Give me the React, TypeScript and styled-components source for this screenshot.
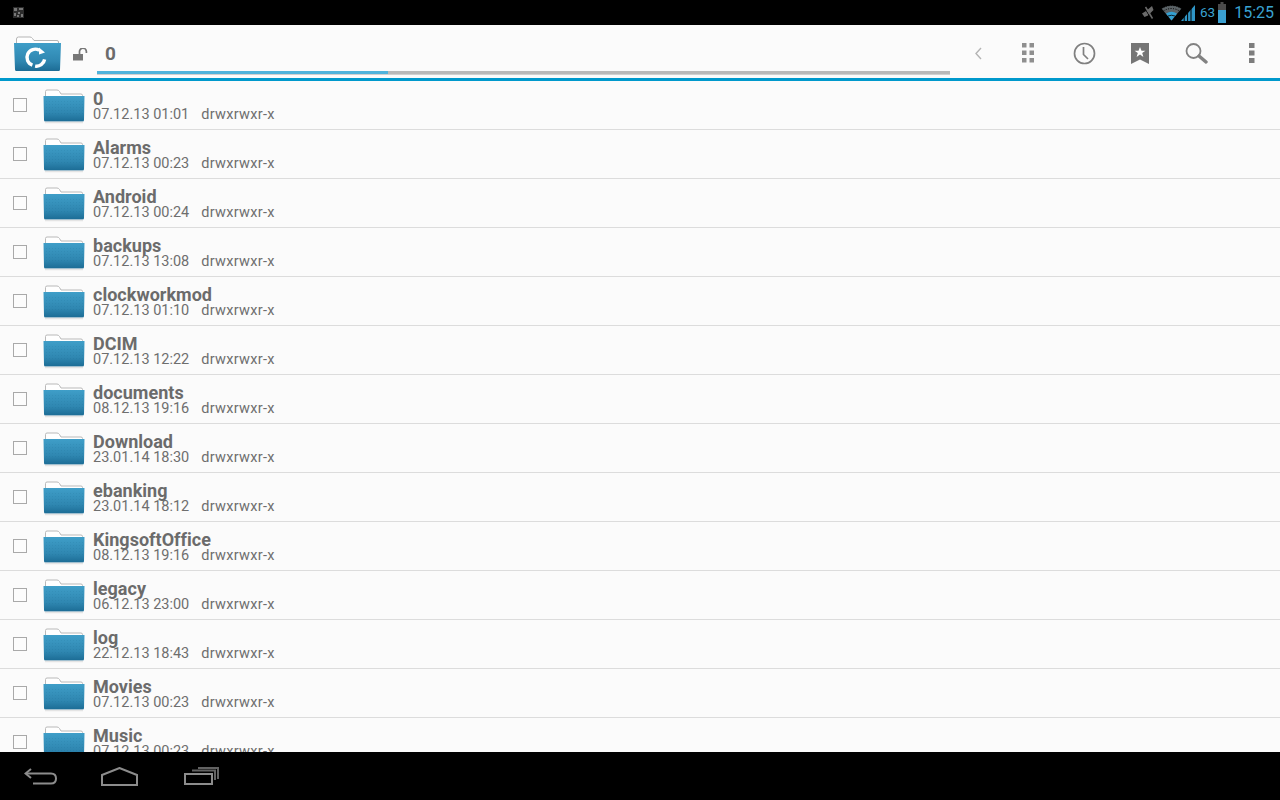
import React from 'react';
import styled, { createGlobalStyle } from 'styled-components';

const Global = createGlobalStyle`
  html, body { margin: 0; padding: 0; height: 100%; overflow: hidden; background: #fbfbfb; }
  #root { height: 100%; }
  * { box-sizing: border-box; }
`;

const Screen = styled.div`
  width: 1280px; height: 800px; display: flex; flex-direction: column;
  font-family: Roboto, "Liberation Sans", sans-serif; background: #fbfbfb; overflow: hidden;
`;
const StatusBar = styled.div`
  height: 25px; flex: none; background: #000; display: flex; align-items: center;
  padding: 0 6px 0 13px;
`;
const Spacer = styled.div`flex: 1;`;
const StatusItem = styled.div<{ $ml: number }>`
  display: flex; flex: none; margin-left: ${p => p.$ml}px;
`;
const StatusText = styled.span<{ $size: number; $ml: number; $weight: number }>`
  font-size: ${p => p.$size}px; font-weight: ${p => p.$weight}; color: #3aa3d2; line-height: 25px;
  margin-left: ${p => p.$ml}px;
`;
const Toolbar = styled.div`
  height: 56px; flex: none; background: #fbfbfb; border-bottom: 3px solid #0099cc;
  display: flex; align-items: center; padding-left: 14px;
`;
const LogoSlot = styled.div`
  flex: none; display: flex; align-self: flex-start; margin-top: 11px;
`;
const LockSlot = styled.div`
  flex: none; display: flex; margin: 5px 0 0 12px;
`;
const PathArea = styled.div`
  width: 853px; height: 53px; flex: none; margin-left: 9px; display: flex; flex-direction: column;
`;
const PathText = styled.div`
  flex: 1; padding: 18px 0 0 8px; font-size: 19px; line-height: 22px; font-weight: 700; color: #6b6b6b;
`;
const PathTrack = styled.div`
  height: 4px; margin-bottom: 3px; background: #b9b9b9; border-bottom: 1px solid #d0d0d0;
`;
const PathFill = styled.div`height: 3px; background: #4fb3dc;`;
const Actions = styled.div`
  flex: 1; display: flex; align-items: center; height: 53px; padding-top: 3px;
`;
const ActionSlot = styled.div<{ $w: number }>`
  width: ${p => p.$w}px; flex: none; display: flex; justify-content: center; align-items: center;
  & > svg { flex: none; }
`;
const List = styled.div`flex: 1; min-height: 0; overflow: hidden;`;
const Row = styled.div`
  height: 49px; display: flex; align-items: center; border-bottom: 1px solid #dcdcdc; padding-left: 13px;
`;
const Check = styled.div`
  width: 14px; height: 14px; border: 1px solid #a9a9a9; flex: none; background: #fcfcfc;
`;
const FolderSlot = styled.div`
  margin-left: 16px; width: 42px; height: 38px; flex: none; display: flex;
`;
const Info = styled.div`
  margin-left: 8px; display: flex; flex-direction: column; padding-top: 1px;
`;
const Name = styled.div`
  font-size: 18px; font-weight: 700; line-height: 18px; color: #6b6b6b; letter-spacing: 0.02px;
`;
const Meta = styled.div`
  display: flex; gap: 12px; font-size: 14.5px; line-height: 14px; color: #6e6e6e; white-space: pre;
`;
const Perms = styled.span`letter-spacing: 0.3px;`;
const NavBar = styled.div`
  height: 48px; flex: none; background: #000; display: flex; align-items: center; padding-left: 24px;
`;
const NavSlot = styled.div<{ $ml: number }>`margin-left: ${p => p.$ml}px; display: flex; flex: none;`;

const Folder = () => (
  <svg width="42" height="38" viewBox="0 0 42 38">
    <defs>
      <linearGradient id="fg" x1="0" y1="0" x2="0" y2="1">
        <stop offset="0" stopColor="#3f9ec8" />
        <stop offset="0.65" stopColor="#2f87b1" />
        <stop offset="1" stopColor="#1c6c95" />
      </linearGradient>
      <pattern id="fd" width="3" height="3" patternUnits="userSpaceOnUse">
        <rect width="1" height="1" fill="#0b4f73" opacity="0.1" />
      </pattern>
    </defs>
    <path d="M2.5 11V5.5Q2.5 4 4 4H14Q15.5 4 16.5 5.5L18 8H38Q39.5 8 39.5 9.5V11Z" fill="#fff" stroke="#b9b9b9" strokeWidth="1" />
    <path d="M0.5 10H41.5L41 34Q41 35.5 39.5 35.5H2.5Q1 35.5 1 34Z" fill="url(#fg)" />
    <path d="M2 15H40V30H2Z" fill="url(#fd)" />
    <path d="M2 36.5H40" stroke="#e4e4e4" strokeWidth="1.4" />
  </svg>
);
const LogoFolder = () => (
  <svg width="47" height="36" viewBox="0 0 47 36">
    <defs>
      <linearGradient id="lg" x1="0" y1="0" x2="0" y2="1">
        <stop offset="0" stopColor="#3f9ec8" />
        <stop offset="0.65" stopColor="#2f87b1" />
        <stop offset="1" stopColor="#1c6c95" />
      </linearGradient>
    </defs>
    <path d="M2.5 9V3Q2.5 1 4.5 1H16Q17.5 1 18.5 2.5L20 4.5H43Q44.5 4.5 44.5 6V9Z" fill="#fff" stroke="#b5b5b5" strokeWidth="1" />
    <path d="M0 7H47L46 33.5Q46 35 44.5 35H2.5Q1 35 1 33.5Z" fill="url(#lg)" />
    <path d="M25.3 14.3A8.2 8.2 0 1 0 18.4 29.1M21.1 30.1A8.2 8.2 0 0 0 30.6 23.4" fill="none" stroke="#fff" strokeWidth="3.4" />
    <path d="M25 11.5L31 16.5L25 18.5Z" fill="#fff" />
  </svg>
);
const Lock = () => (
  <svg width="15" height="13" viewBox="0 0 15 13">
    <path d="M0 6H10V12.5H0Z" fill="#777" />
    <path d="M6.5 6V3.8A3.2 3.2 0 0 1 13.4 3.5V5" fill="none" stroke="#777" strokeWidth="1.7" />
  </svg>
);
const Back = () => (
  <svg width="7" height="13" viewBox="0 0 7 13"><path d="M6 1L1 6.5L6 12" fill="none" stroke="#b4b4b4" strokeWidth="1.4" /></svg>
);
const Grid = () => (
  <svg width="12" height="20" viewBox="0 0 12 20" fill="#8f8f8f">
    {[0, 7.5, 15].flatMap(y => [0, 7.5].map(x => <rect key={`${x}-${y}`} x={x} y={y} width="4.5" height="4.5" />))}
  </svg>
);
const Clock = () => (
  <svg width="23" height="23" viewBox="0 0 23 23">
    <circle cx="11.5" cy="11.5" r="10" fill="none" stroke="#808080" strokeWidth="1.7" />
    <path d="M10.5 5V12.5L15 17" fill="none" stroke="#808080" strokeWidth="1.7" />
  </svg>
);
const Bookmark = () => (
  <svg width="18" height="21" viewBox="0 0 18 21">
    <path d="M0 0H18V21L9 16.5L0 21Z" fill="#757575" />
    <path d="M9 4L10.5 7.7H14.4L11.2 10.1L12.4 13.9L9 11.6L5.6 13.9L6.8 10.1L3.6 7.7H7.5Z" fill="#fff" />
  </svg>
);
const Search = () => (
  <svg width="23" height="21" viewBox="0 0 23 21">
    <circle cx="8.5" cy="8" r="7" fill="none" stroke="#828282" strokeWidth="1.8" />
    <path d="M14 13L21 19" stroke="#828282" strokeWidth="3.4" strokeLinecap="round" />
  </svg>
);
const More = () => (
  <svg width="6" height="20" viewBox="0 0 6 20" fill="#7d7d7d">
    <rect width="5.5" height="5" /><rect y="7.5" width="5.5" height="5" /><rect y="15" width="5.5" height="5" />
  </svg>
);
const Notif = () => (
  <svg width="11" height="11" viewBox="0 0 11 11">
    <rect width="11" height="11" fill="#2c2c2c" />
    <path d="M1 1H4V4H1ZM6 1H10V3H6ZM1 6H3V9H1ZM5 5H7V7H5ZM8 7H10V10H8ZM4 8H6V10H4Z" fill="#777" />
  </svg>
);
const Muted = () => (
  <svg width="14" height="15" viewBox="0 0 14 15">
    <path d="M11 1L5 6L1 8.5L3.5 12L7 10.5L12.5 5Z" fill="#6a6a6a" />
    <path d="M3 2L10 13.5" stroke="#000" strokeWidth="1" />
    <path d="M4.5 2L11.5 13.5" stroke="#6a6a6a" strokeWidth="1.5" />
  </svg>
);
const Wifi = () => (
  <svg width="21" height="16" viewBox="0 0 21 16">
    <path d="M0.5 3.5Q10.5 -2.5 20.5 3.5L10.5 15.5Z" fill="#5a6266" />
    <path d="M0.5 3.5Q10.5 -2.5 20.5 3.5M2.5 6Q10.5 1 18.5 6" fill="none" stroke="#000" strokeWidth="1" strokeDasharray="1 1.5" />
    <path d="M5 8.5Q10.5 5 16 8.5L10.5 15.5Z" fill="#33a0d2" />
    <path d="M7 11Q10.5 9.5 14 11" fill="none" stroke="#000" strokeWidth="0.8" />
  </svg>
);
const Signal = () => (
  <svg width="14" height="16" viewBox="0 0 14 16"><path d="M0 16L14 0V16Z" fill="#2f95c5" /><path d="M3.2 4V16M6.6 4V16M10 0V16" stroke="#000" strokeWidth="1" /></svg>
);
const Battery = () => (
  <svg width="8" height="21" viewBox="0 0 8 21">
    <path d="M2.5 0H5.5V2H8V8H0V2H2.5Z" fill="#4a4a4a" />
    <rect y="8" width="8" height="13" fill="#3a9fd0" />
  </svg>
);
const NavBack = () => (
  <svg width="33" height="17" viewBox="0 0 33 17" fill="none" stroke="#8c8c8c" strokeWidth="2">
    <path d="M7 1L1.5 5.5L7 10" />
    <path d="M2 5.5H27Q32 5.5 32 10.5Q32 15.5 27 15.5H9" />
  </svg>
);
const NavHome = () => (
  <svg width="37" height="19" viewBox="0 0 37 19" fill="none" stroke="#8c8c8c" strokeWidth="2">
    <path d="M1 18V8L18.5 1L36 8V18Z" />
  </svg>
);
const NavRecent = () => (
  <svg width="35" height="18" viewBox="0 0 35 18" fill="none" stroke="#8c8c8c" strokeWidth="2">
    <path d="M1 7H28V17H1Z" />
    <path d="M8 3.5H31V13" opacity="0.7" />
    <path d="M14 1H34V12" opacity="0.7" />
  </svg>
);

const items: [string, string][] = [
  ['0', '07.12.13 01:01'], ['Alarms', '07.12.13 00:23'], ['Android', '07.12.13 00:24'],
  ['backups', '07.12.13 13:08'], ['clockworkmod', '07.12.13 01:10'], ['DCIM', '07.12.13 12:22'],
  ['documents', '08.12.13 19:16'], ['Download', '23.01.14 18:30'], ['ebanking', '23.01.14 18:12'],
  ['KingsoftOffice', '08.12.13 19:16'], ['legacy', '06.12.13 23:00'], ['log', '22.12.13 18:43'],
  ['Movies', '07.12.13 00:23'], ['Music', '07.12.13 00:23'],
];

export default function App() {
  return (
    <Screen>
      <Global />
      <StatusBar>
        <Notif />
        <Spacer />
        <StatusItem $ml={0}><Muted /></StatusItem>
        <StatusItem $ml={6}><Wifi /></StatusItem>
        <StatusItem $ml={-1}><Signal /></StatusItem>
        <StatusText $size={13.5} $ml={5} $weight={400}>63</StatusText>
        <StatusItem $ml={3}><Battery /></StatusItem>
        <StatusText $size={16} $ml={8} $weight={400}>15:25</StatusText>
      </StatusBar>
      <Toolbar>
        <LogoSlot><LogoFolder /></LogoSlot>
        <LockSlot><Lock /></LockSlot>
        <PathArea>
          <PathText>0</PathText>
          <PathTrack><PathFill style={{ width: '34.1%' }} /></PathTrack>
        </PathArea>
        <Actions>
          <ActionSlot $w={56}><Back /></ActionSlot>
          <ActionSlot $w={44}><Grid /></ActionSlot>
          <ActionSlot $w={68}><Clock /></ActionSlot>
          <ActionSlot $w={43}><Bookmark /></ActionSlot>
          <ActionSlot $w={71}><Search /></ActionSlot>
          <ActionSlot $w={39}><More /></ActionSlot>
        </Actions>
      </Toolbar>
      <List>
        {items.map(([name, date]) => (
          <Row key={name}>
            <Check />
            <FolderSlot><Folder /></FolderSlot>
            <Info>
              <Name>{name}</Name>
              <Meta><span>{date}</span><Perms>drwxrwxr-x</Perms></Meta>
            </Info>
          </Row>
        ))}
      </List>
      <NavBar>
        <NavBack />
        <NavSlot $ml={44}><NavHome /></NavSlot>
        <NavSlot $ml={46}><NavRecent /></NavSlot>
      </NavBar>
    </Screen>
  );
}
